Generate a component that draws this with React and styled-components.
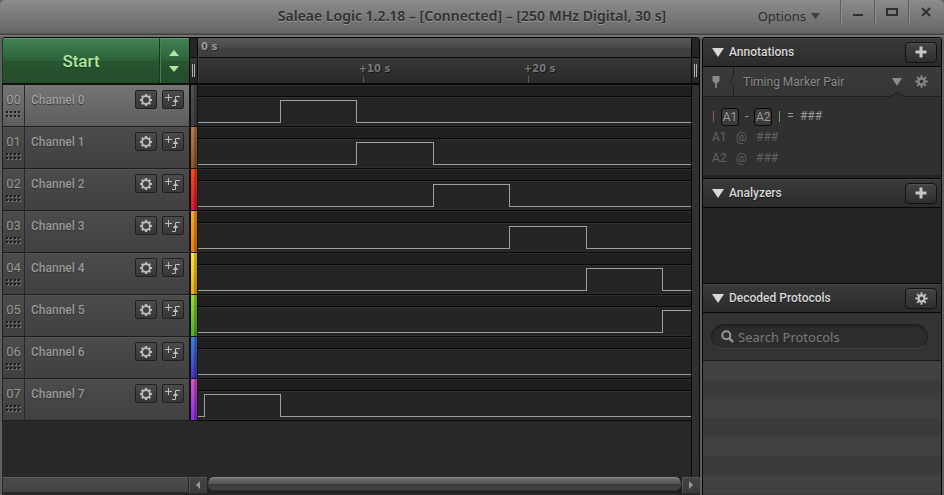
import React from "react";
import styled, { createGlobalStyle } from "styled-components";

const Global = createGlobalStyle`
  * { box-sizing: border-box; }
  body { margin: 0; background: #5f5f5f; font-family: Roboto, "Liberation Sans", sans-serif; }
  button, input, select { font: inherit; color: inherit; margin: 0; padding: 0; border: 0; background: none; }
  svg { display: block; }
`;

const Window = styled.div`
  display: flex;
  flex-direction: column;
  min-height: 100vh;
  background: #5f5f5f;
  border-radius: 5px 5px 0 0;
  overflow: hidden;
`;

const TitleBar = styled.header`
  display: grid;
  grid-template-columns: 1fr auto 1fr;
  height: 37px;
  background: linear-gradient(#8c8c8e, #666 33px, #424242 34px, #424242 35px, #777 35px, #707070);
  color: #303030;
  text-shadow: 0 1px 0 #999;
`;

const Title = styled.h1`
  grid-column: 2;
  margin: 0;
  font: 600 14px/32px "Noto Sans", sans-serif;
  white-space: nowrap;
`;

const WindowActions = styled.div`
  display: flex;
  justify-content: flex-end;
  align-items: flex-start;
  padding-right: 2px;
`;

const OptionsButton = styled.button`
  display: flex;
  align-items: center;
  gap: 5px;
  height: 32px;
  margin-right: 20px;
  font: 13px/32px "Noto Sans", sans-serif;
`;

const WindowButton = styled.button`
  display: grid;
  place-items: center;
  width: 34px;
  height: 24px;
  border-left: 1px solid #606060;
  box-shadow: inset 1px 0 0 #8b8b8b;
`;

const Workspace = styled.main`
  flex: 1;
  display: grid;
  grid-template-columns: minmax(0, 1fr) 240px;
  gap: 2px;
  padding: 0 2px;
`;

const Capture = styled.section`
  display: grid;
  grid-template-columns: 187px 9px minmax(0, 1fr) 9px;
  grid-template-rows: 47px auto 1fr 18px;
  border-top: 1px solid #080808;
  border-radius: 4px 4px 0 0;
  background: #282828;
  overflow: hidden;
`;

const StartGroup = styled.div`
  display: grid;
  grid-template-columns: 1fr 30px;
  border: 1px solid #193d25;
  border-width: 0 0 1px 1px;
  border-bottom: 2px solid #111;
  background: linear-gradient(#438257, #2c6139 50%, #28552f 51%, #254b2b);
  box-shadow: inset 0 1px 0 #5d9a6d;
`;

const StartButton = styled.button`
  color: #afe5a0;
  font-size: 17px;
  font-weight: 500;
  line-height: 44px;
  text-shadow: 0 1px 1px #173b20;
`;

const StepButtons = styled.div`
  display: flex;
  flex-direction: column;
  align-items: center;
  justify-content: center;
  gap: 2px;
  padding-right: 2px;
  border-left: 1px solid #163a20;
  box-shadow: inset 1px 0 0 #42814f;
  button { display: grid; place-items: center; width: 18px; height: 14px; }
`;

const Grip = styled.div`
  display: grid;
  grid-template-rows: 19px 1fr;
  border: 1px solid #070707;
  border-width: 0 1px 2px;
  background: #252525;
  span { border-top: 1px solid #070707; display: flex; justify-content: center; align-items: center; gap: 1px; background: linear-gradient(#353535, #232323); }
  i { width: 1px; height: 13px; background: #b0b0b0; }
`;

const Ruler = styled.div`
  min-width: 0;
  overflow: hidden;
  display: grid;
  grid-template-rows: 19px 1fr;
  font: 700 10px/18px "DejaVu Sans", sans-serif;
  border-bottom: 2px solid #080808;
`;

const RulerOrigin = styled.div`
  padding-left: 3px;
  color: #9c9c9c;
  text-shadow: 1px 1px 0 #292929;
  background: linear-gradient(#5a5a5a, #494949 50%, #414141 51%, #3e3e3e);
`;

const Ticks = styled.div`
  display: flex;
  border-top: 1px solid #080808;
  background: linear-gradient(#373737, #292929);
  box-shadow: inset 1px 0 0 #444;
  padding-left: 32.6%;
`;

const Tick = styled.div`
  flex: 0 0 49.7%;
  color: #777;
  line-height: 18px;
  padding-top: 2px;
  text-shadow: 1px 1px 0 #161616;
  white-space: nowrap;
  &::after { content: ""; display: block; width: 1px; height: 8px; margin-left: 4px; margin-top: -2px; background: #5a5a5a; }
`;

const Rows = styled.div`
  grid-column: 1 / -1;
  display: grid;
`;

const ChannelRow = styled.div`
  display: grid;
  grid-template-columns: 187px 9px minmax(0, 1fr) 9px;
  height: 42px;
`;

const ChannelLabel = styled.div`
  display: grid;
  grid-template-columns: 22px 1fr 22px 22px;
  column-gap: 5px;
  padding-right: 5px;
  color: ${(p) => (p.$active ? "#a0a0a0" : "#989898")};
  background: ${(p) => (p.$active ? "linear-gradient(#757575, #5d5d5d)" : "linear-gradient(#4c4c4c, #404040)")};
  border-left: 1px solid #222;
  border-bottom: 1px solid #1d1d1d;
  box-shadow: inset 0 1px 0 ${(p) => (p.$active ? "#777" : "#535353")};
  font-size: 12px;
  font-weight: 500;
  text-shadow: 0 1px 1px #333;
`;

const ChannelIndex = styled.div`
  display: flex;
  flex-direction: column;
  align-items: center;
  border-right: 1px solid #292929;
  font-size: 13px;
  font-weight: 400;
  line-height: 30px;
  svg { margin-top: -4px; }
`;

const ChannelName = styled.span`
  padding-left: 1px;
  line-height: 30px;
`;

const SmallButton = styled.button`
  display: grid;
  place-items: center;
  width: 22px;
  height: 19px;
  margin-top: 5px;
  border: 1px solid #202020;
  border-radius: 2px;
  background: linear-gradient(#4b4b4b, #373737);
  color: #bcbcbc;
`;

const ColorStrip = styled.div`
  border: solid #111;
  border-width: 0 1px 1px 2px;
  background:
    linear-gradient(90deg, transparent 3px, rgba(0, 0, 0, 0.25) 3px),
    linear-gradient(${(p) => p.$top}, ${(p) => p.$bottom});
`;

const Wave = styled.div`
  display: grid;
  grid-template-rows: 10px 1fr;
  min-width: 0;
  background: #1f1f1f;
  border-bottom: 1px solid #070707;
  border-top: 1px solid #2d2d2d;
`;

const WaveTrack = styled.div`
  border-top: 1px solid #070707;
  background: #252525;
  box-shadow: inset 0 1px 0 #303030, inset 0 -1px 0 #2d2d2d;
  svg { width: 100%; height: 28px; }
`;

const Gutter = styled.div`
  background: #303030;
  border: 1px solid #080808;
  border-width: 0 1px;
`;

const Blank = styled.div`
  grid-column: 1 / 4;
`;

const BottomBar = styled.div`
  grid-column: 1 / -1;
  display: grid;
  grid-template-columns: 187px 18px minmax(0, 1fr) 18px;
  border-bottom: 2px solid #282828;
  background: #202020;
`;

const BottomCell = styled.div`
  border: 1px solid #292929;
  border-top-color: #5a5a5a;
  background: linear-gradient(#4c4c4c, #444);
`;

const ScrollButton = styled.button`
  display: grid;
  place-items: center;
  background: linear-gradient(#444, #3b3b3b);
  box-shadow: inset 1px 1px 0 #565656;
`;

const ScrollThumb = styled.button`
  height: 14px;
  border: 1px solid #303030;
  border-top-color: #898989;
  border-radius: 7px;
  background: linear-gradient(#717171, #515151 50%, #3b3b3b 51%, #414141);
`;

const Sidebar = styled.aside`
  display: flex;
  flex-direction: column;
  border: 1px solid #090909;
  border-bottom: 0;
  border-radius: 4px 4px 0 0;
  background: #252525;
  overflow: hidden;
`;

const PanelHeader = styled.div`
  display: flex;
  justify-content: space-between;
  align-items: center;
  height: ${(p) => (p.$first ? "29px" : "30px")};
  padding: 0 4px 0 9px;
  border-top: ${(p) => (p.$first ? "0" : "1px solid #070707")};
  border-bottom: 1px solid #070707;
  background: linear-gradient(#3a3a3a, #2b2b2b);
  box-shadow: inset 0 1px 0 #454545;
`;

const PanelToggle = styled.button`
  display: flex;
  align-items: center;
  gap: 5px;
  color: #d8d8d8;
  font-size: 12px;
  font-weight: 500;
  line-height: 24px;
  text-shadow: 0 1px 0 #111;
`;

const PanelButton = styled.button`
  display: grid;
  place-items: center;
  width: 32px;
  height: 21px;
  border: 1px solid #111;
  border-radius: 4px;
  background: linear-gradient(#444, #2e2e2e);
  box-shadow: inset 0 1px 0 #505050;
  color: #c8c8c8;
`;

const MarkerRow = styled.div`
  display: grid;
  grid-template-columns: 23px 16px 1fr 18px;
  align-items: center;
  height: 29px;
  padding: 0 13px 0 1px;
  background: linear-gradient(#3b3b3b, #353535);
  color: #8b8b8b;
  > svg:first-child { justify-self: center; }
`;

const SelectBox = styled.label`
  display: grid;
  align-items: center;
  > * { grid-area: 1 / 1; }
  svg { justify-self: end; margin-right: 8px; pointer-events: none; }
`;

const MarkerSelect = styled.select`
  appearance: none;
  width: 100%;
  height: 28px;
  font-size: 12px;
  outline: 0;
  text-shadow: 0 1px 1px #222;
`;

const IconButton = styled.button`
  display: grid;
  place-items: center;
  color: #8b8b8b;
  justify-self: end;
`;

const Notch = styled.div`
  display: flex;
  height: 5px;
  margin-top: -4px;
  &::before { content: ""; flex: 1; border-bottom: 1px solid #1e1e1e; }
  &::after { content: ""; width: 37px; border-bottom: 1px solid #1e1e1e; }
`;

const Measurements = styled.div`
  height: 78px;
  padding: 9px 9px 0;
  background: #303030;
  color: #9a9a9a;
  font-size: 12px;
  line-height: 21px;
`;

const Formula = styled.div`
  display: flex;
  align-items: center;
  gap: 6px;
  height: 21px;
`;

const MarkerTag = styled.span`
  width: 18px;
  height: 18px;
  border: 1px solid #090909;
  border-radius: 3px;
  background: #3b3b3b;
  line-height: 16px;
  text-align: center;
`;

const Bar = styled.span`
  width: 1px;
  height: 11px;
  margin: 0 1px;
  background: ${(p) => p.$color};
`;

const Reading = styled.div`
  display: grid;
  grid-template-columns: 24px 20px 1fr;
  color: #616161;
`;

const EmptyPanel = styled.div`
  height: ${(p) => (p.$gap ? "3px" : "75px")};
  background: #242424;
`;

const SearchArea = styled.div`
  height: 48px;
  padding: 11px 13px 12px 8px;
  border-bottom: 1px solid #181818;
  background: #333;
`;

const SearchBox = styled.label`
  display: flex;
  align-items: center;
  gap: 4px;
  height: 25px;
  padding: 0 9px;
  border: 1px solid #222;
  border-bottom-color: #444;
  border-radius: 13px;
  background: #2c2c2c;
  box-shadow: inset 0 1px 2px #1c1c1c;
  color: #969696;
  input { min-width: 0; flex: 1; outline: 0; font: 13px/20px "Noto Sans", sans-serif; }
  input::placeholder { color: #7b7b7b; opacity: 1; }
`;

const ProtocolList = styled.div`
  flex: 1;
  background: repeating-linear-gradient(#414141 0 19px, #3b3b3b 19px 38px);
`;

const Triangle = ({ width = 11, height = 9, up, fill = "currentColor" }) => (
  <svg width={width} height={height} viewBox="0 0 10 8" preserveAspectRatio="none" aria-hidden="true">
    <path d={up ? "M0 8 5 0 10 8Z" : "M0 0H10L5 8Z"} fill={fill} />
  </svg>
);

const Gear = ({ ring }) => (
  <svg width={ring ? 14 : 13} height={ring ? 14 : 13} viewBox={ring ? "-7 -7 14 14" : "-6.5 -6.5 13 13"} fill="none" stroke="currentColor" aria-hidden="true">
    <circle r={ring ? 3.9 : 3.1} strokeWidth={ring ? 1.8 : 2.2} />
    {[0, 45, 90, 135, 180, 225, 270, 315].map((a) => (
      <path key={a} d={ring ? "M0-4V-6" : "M0-4V-6.2"} strokeWidth={ring ? 2.2 : 1.8} transform={`rotate(${a})`} />
    ))}
  </svg>
);

const TriggerIcon = () => (
  <svg width="16" height="14" viewBox="0 0 16 14" fill="none" stroke="currentColor" aria-hidden="true">
    <path d="M0 4.5H7M3.5 1V8M7 12.5H10.5V3.5H15M8 8.5H13" />
    <path d="M8 8.5 10.5 5.5 13 8.5Z" fill="currentColor" stroke="none" />
  </svg>
);

const Dots = () => (
  <svg width="15" height="7" viewBox="0 0 15 7" aria-hidden="true">
    {[0, 4, 8, 12].map((x) => [0, 4].map((y) => (
      <g key={`${x}-${y}`}>
        <rect x={x + 1} y={y + 1} width="2" height="2" fill="#777" />
        <rect x={x} y={y} width="2" height="2" fill="#1b1b1b" />
      </g>
    )))}
  </svg>
);

const Plus = () => (
  <svg width="12" height="12" viewBox="0 0 12 12" aria-hidden="true">
    <path d="M6 0.5V11.5M0.5 6H11.5" stroke="currentColor" strokeWidth="3" />
  </svg>
);

const channels = [
  { top: "#505050", bottom: "#404040", path: "M0 25.5H82.5V3.5H158.5V25.5H493" },
  { top: "#b87d50", bottom: "#8d5727", path: "M0 25.5H158.5V3.5H235.5V25.5H493" },
  { top: "#ff4a1c", bottom: "#e01535", path: "M0 25.5H235.5V3.5H311.5V25.5H493" },
  { top: "#ffab28", bottom: "#ee7c08", path: "M0 25.5H311.5V3.5H388.5V25.5H493" },
  { top: "#ffe838", bottom: "#f0b010", path: "M0 25.5H388.5V3.5H464.5V25.5H493" },
  { top: "#9bdd3a", bottom: "#54ac2c", path: "M0 25.5H464.5V3.5H493" },
  { top: "#3f83dd", bottom: "#4a36c8", path: "M0 25.5H493" },
  { top: "#dc55cf", bottom: "#8a2fe8", path: "M0 25.5H6.5V3.5H82.5V25.5H493" },
];

const Channel = ({ channel, index }) => (
  <ChannelRow>
    <ChannelLabel $active={index === 0}>
      <ChannelIndex>0{index}<Dots /></ChannelIndex>
      <ChannelName>Channel {index}</ChannelName>
      <SmallButton aria-label={`Channel ${index} settings`}><Gear ring /></SmallButton>
      <SmallButton aria-label={`Channel ${index} trigger`}><TriggerIcon /></SmallButton>
    </ChannelLabel>
    <ColorStrip $top={channel.top} $bottom={channel.bottom} />
    <Wave>
      <span />
      <WaveTrack>
        <svg viewBox="0 0 493 28" preserveAspectRatio="none" aria-hidden="true">
          <path d={channel.path} fill="none" stroke="#a0a0a0" vectorEffect="non-scaling-stroke" shapeRendering="crispEdges" />
        </svg>
      </WaveTrack>
    </Wave>
    <Gutter />
  </ChannelRow>
);

const Header = ({ title, first, children }) => (
  <PanelHeader $first={first}>
    <PanelToggle aria-expanded="true"><Triangle width={12} height={9} />{title}</PanelToggle>
    <PanelButton aria-label={`${title} action`}>{children}</PanelButton>
  </PanelHeader>
);

export default function App() {
  return (
    <>
      <Global />
      <Window>
        <TitleBar>
          <Title>Saleae Logic 1.2.18 – [Connected] – [250 MHz Digital, 30 s]</Title>
          <WindowActions>
            <OptionsButton>Options<Triangle width={9} height={6} fill="#404040" /></OptionsButton>
            <WindowButton aria-label="Minimize">
              <svg width="12" height="12" viewBox="0 0 12 12"><path d="M1 9H11" stroke="#303030" strokeWidth="2" /></svg>
            </WindowButton>
            <WindowButton aria-label="Maximize">
              <svg width="12" height="8" viewBox="0 0 12 8"><path d="M1 1H11V7H1Z" fill="none" stroke="#303030" strokeWidth="2" /></svg>
            </WindowButton>
            <WindowButton aria-label="Close">
              <svg width="10" height="10" viewBox="0 0 10 10"><path d="M1 1 9 9M9 1 1 9" stroke="#303030" strokeWidth="2" /></svg>
            </WindowButton>
          </WindowActions>
        </TitleBar>
        <Workspace>
          <Capture>
            <StartGroup>
              <StartButton>Start</StartButton>
              <StepButtons>
                <button aria-label="Increase"><Triangle up width={10} height={6} fill="#afe5a0" /></button>
                <button aria-label="Decrease"><Triangle width={10} height={6} fill="#afe5a0" /></button>
              </StepButtons>
            </StartGroup>
            <Grip><b /><span><i /><i /></span></Grip>
            <Ruler>
              <RulerOrigin>0 s</RulerOrigin>
              <Ticks>
                <Tick>+10 s</Tick>
                <Tick>+20 s</Tick>
              </Ticks>
            </Ruler>
            <Grip><b /><span><i /><i /></span></Grip>
            <Rows>
              {channels.map((channel, index) => <Channel key={index} channel={channel} index={index} />)}
            </Rows>
            <Blank />
            <Gutter />
            <BottomBar>
              <BottomCell />
              <ScrollButton aria-label="Scroll left">
                <svg width="4" height="8" viewBox="0 0 4 8"><path d="M4 0V8L0 4Z" fill="#999" /></svg>
              </ScrollButton>
              <ScrollThumb aria-label="Timeline position" />
              <ScrollButton aria-label="Scroll right">
                <svg width="4" height="8" viewBox="0 0 4 8"><path d="M0 0V8L4 4Z" fill="#999" /></svg>
              </ScrollButton>
            </BottomBar>
          </Capture>
          <Sidebar>
            <Header title="Annotations" first><Plus /></Header>
            <MarkerRow>
              <svg width="8" height="13" viewBox="0 0 8 13" aria-hidden="true"><path d="M0.5 1H7.5V6L4.8 8.5V13H3.2V8.5L0.5 6Z" fill="currentColor" /></svg>
              <svg width="7" height="29" viewBox="0 0 7 29" aria-hidden="true"><path d="M6.5 0V10.5L2.5 14.5 6.5 18.5V29" fill="none" stroke="#202020" /></svg>
              <SelectBox>
                <MarkerSelect aria-label="Annotation type"><option>Timing Marker Pair</option></MarkerSelect>
                <Triangle width={10} height={8} />
              </SelectBox>
              <IconButton aria-label="Annotation settings"><Gear /></IconButton>
            </MarkerRow>
            <Notch>
              <svg width="14" height="5" viewBox="0 0 14 5" aria-hidden="true"><path d="M0 4.5 7 0.5 14 4.5V5H0Z" fill="#303030" /><path d="M0 4.5 7 0.5 14 4.5" fill="none" stroke="#1e1e1e" /></svg>
            </Notch>
            <Measurements>
              <Formula>
                <Bar $color="#9b5353" /><MarkerTag>A1</MarkerTag><span>-</span><MarkerTag>A2</MarkerTag><Bar $color="#679b60" /><span>=</span><span>###</span>
              </Formula>
              <Reading><span>A1</span><span>@</span><span>###</span></Reading>
              <Reading><span>A2</span><span>@</span><span>###</span></Reading>
            </Measurements>
            <EmptyPanel $gap />
            <Header title="Analyzers"><Plus /></Header>
            <EmptyPanel />
            <Header title="Decoded Protocols"><Gear /></Header>
            <SearchArea>
              <SearchBox>
                <svg width="13" height="13" viewBox="0 0 13 13" fill="none" stroke="currentColor" aria-hidden="true"><circle cx="5.3" cy="5.3" r="4" strokeWidth="2" /><path d="M8.2 8.2 12 12" strokeWidth="2.4" /></svg>
                <input type="search" aria-label="Search Protocols" placeholder="Search Protocols" />
              </SearchBox>
            </SearchArea>
            <ProtocolList />
          </Sidebar>
        </Workspace>
      </Window>
    </>
  );
}
